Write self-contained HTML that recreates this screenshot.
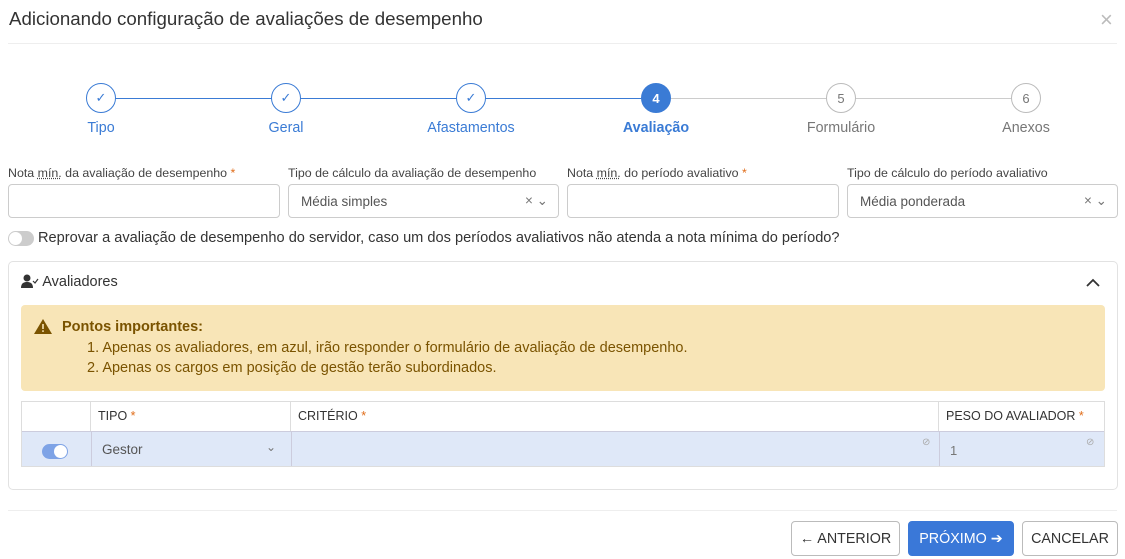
<!DOCTYPE html><html><head><meta charset="utf-8"><style>
*{box-sizing:border-box;margin:0;padding:0}
body{width:1125px;height:559px;background:#fff;font-family:"Liberation Sans","DejaVu Sans",sans-serif;color:#333;position:relative;overflow:hidden}
.a{position:absolute}
.circ{position:absolute;width:30px;height:30px;border-radius:50%;border:1.5px solid #3a7bd5;background:#fff;top:83px;display:flex;align-items:center;justify-content:center;font-size:13px;color:#3a7bd5}
.gray{border-color:#bbb;color:#777}
.lab{position:absolute;top:120px;font-size:14.3px;color:#3a7bd5;transform:translateX(-50%);white-space:nowrap}
.fl{position:absolute;top:166px;font-size:12.4px;color:#444;white-space:nowrap}
.st{color:#e06d1a}
.in{position:absolute;top:184px;height:34px;border:1px solid #ccc;border-radius:4px;font-size:13.5px;color:#555;padding:9px 12px}
.th{position:absolute;top:401px;height:30px;font-size:12.5px;color:#333;padding:8px 7px;border-right:1px solid #ddd}
.btn{position:absolute;top:521px;height:35px;border:1px solid #bbb;border-radius:4px;font-size:14.3px;display:flex;align-items:center;justify-content:center;color:#333;background:#fff}
</style></head><body>
<div class="a" style="left:9px;top:8px;font-size:18.7px;color:#333">Adicionando configuração de avaliações de desempenho</div>
<div class="a" style="left:1100px;top:7px;font-size:22px;color:#bbb">×</div>
<div class="a" style="left:8px;right:8px;top:43px;border-top:1px solid #eee"></div>
<div class="a" style="left:101px;top:98px;width:555px;border-top:1.5px solid #3a7bd5"></div>
<div class="a" style="left:656px;top:98px;width:370px;border-top:1px solid #ccc"></div>
<div class="circ" style="left:86px">✓</div>
<div class="circ" style="left:271px">✓</div>
<div class="circ" style="left:456px">✓</div>
<div class="circ" style="left:641px;background:#3a7bd5;color:#fff;font-weight:bold">4</div>
<div class="circ gray" style="left:826px">5</div>
<div class="circ gray" style="left:1011px">6</div>
<div class="lab" style="left:101px">Tipo</div>
<div class="lab" style="left:286px">Geral</div>
<div class="lab" style="left:471px">Afastamentos</div>
<div class="lab" style="left:656px;font-weight:bold">Avaliação</div>
<div class="lab" style="left:841px;color:#777">Formulário</div>
<div class="lab" style="left:1026px;color:#777">Anexos</div>
<div class="fl" style="left:8px">Nota <u style="text-decoration:underline dotted">mín.</u> da avaliação de desempenho <span class="st">*</span></div>
<div class="fl" style="left:288px">Tipo de cálculo da avaliação de desempenho</div>
<div class="fl" style="left:567px">Nota <u style="text-decoration:underline dotted">mín.</u> do período avaliativo <span class="st">*</span></div>
<div class="fl" style="left:847px">Tipo de cálculo do período avaliativo</div>
<div class="in" style="left:8px;width:272px"></div>
<div class="in" style="left:288px;width:271px">Média simples<span style="position:absolute;right:10px;top:8px;color:#777">× ⌄</span></div>
<div class="in" style="left:567px;width:272px"></div>
<div class="in" style="left:847px;width:271px">Média ponderada<span style="position:absolute;right:10px;top:8px;color:#777">× ⌄</span></div>
<div class="a" style="left:8px;top:231px;width:26px;height:15px;border-radius:8px;background:#ccc"><div class="a" style="left:1px;top:1px;width:13px;height:13px;border-radius:50%;background:#fff"></div></div>
<div class="a" style="left:38px;top:230px;font-size:14.6px;white-space:nowrap">Reprovar a avaliação de desempenho do servidor, caso um dos períodos avaliativos não atenda a nota mínima do período?</div>
<div class="a" style="left:8px;top:261px;width:1110px;height:229px;border:1px solid #e2e2e2;border-radius:5px"></div>
<div class="a" style="left:21px;top:274px;font-size:14.5px"><svg width="18" height="14" viewBox="0 0 18 14" style="vertical-align:-2px"><circle cx="6" cy="4" r="3.5" fill="#333"/><path d="M0 14c0-5 3-6 6-6s6 1 6 6z" fill="#333"/><path d="M12 7l2 2 3-4" stroke="#333" fill="none" stroke-width="1.2"/></svg> Avaliadores</div>
<svg class="a" style="left:1086px;top:278px" width="14" height="10" viewBox="0 0 14 10"><path d="M1 8l6-6 6 6" stroke="#333" stroke-width="1.8" fill="none"/></svg>
<div class="a" style="left:21px;top:305px;width:1084px;height:86px;background:#f8e5b7;border-radius:4px;color:#7a5300;font-size:14.5px;white-space:nowrap">
<div class="a" style="left:13px;top:14px"><svg width="18" height="15" viewBox="0 0 18 15"><path d="M9 0L18 15H0z" fill="#7a5300"/><rect x="8.2" y="5" width="1.6" height="5" fill="#f8e5b7"/><rect x="8.2" y="11.3" width="1.6" height="1.6" fill="#f8e5b7"/></svg></div>
<div class="a" style="left:41px;top:14px;font-weight:bold">Pontos importantes:</div>
<div class="a" style="left:66px;top:35px">1. Apenas os avaliadores, em azul, irão responder o formulário de avaliação de desempenho.</div>
<div class="a" style="left:66px;top:55px">2. Apenas os cargos em posição de gestão terão subordinados.</div></div>
<div class="a" style="left:21px;top:401px;width:1084px;height:66px;border:1px solid #ddd"></div>
<div class="th" style="left:21px;width:70px"></div>
<div class="th" style="left:91px;width:200px">TIPO <span class="st">*</span></div>
<div class="th" style="left:291px;width:648px">CRITÉRIO <span class="st">*</span></div>
<div class="th" style="left:939px;width:166px;border:none">PESO DO AVALIADOR <span class="st">*</span></div>
<div class="a" style="left:22px;top:431px;width:1082px;height:35px;background:#dfe8f8;border-top:1px solid #ccd"></div>
<div class="a" style="left:42px;top:444px;width:26px;height:15px;border-radius:8px;background:#7ea3e6"><div class="a" style="right:1px;top:1px;width:13px;height:13px;border-radius:50%;background:#fff"></div></div>
<div class="a" style="left:91px;top:431px;width:1px;height:35px;background:#ccd"></div>
<div class="a" style="left:291px;top:431px;width:1px;height:35px;background:#ccd"></div>
<div class="a" style="left:939px;top:431px;width:1px;height:35px;background:#ccd"></div>
<div class="a" style="left:102px;top:442px;font-size:13.5px;color:#555">Gestor</div>
<div class="a" style="left:266px;top:440px;font-size:12px;color:#777">⌄</div>
<div class="a" style="left:922px;top:437px;font-size:10px;color:#aaa">⊘</div>
<div class="a" style="left:950px;top:443px;font-size:13px;color:#777">1</div>
<div class="a" style="left:1086px;top:437px;font-size:10px;color:#aaa">⊘</div>
<div class="a" style="left:8px;right:8px;top:510px;border-top:1px solid #eee"></div>
<div class="btn" style="left:791px;width:109px">← ANTERIOR</div>
<div class="btn" style="left:908px;width:106px;background:#3a78d8;border-color:#3a78d8;color:#fff">PRÓXIMO ➔</div>
<div class="btn" style="left:1022px;width:96px">CANCELAR</div>
</body></html>
